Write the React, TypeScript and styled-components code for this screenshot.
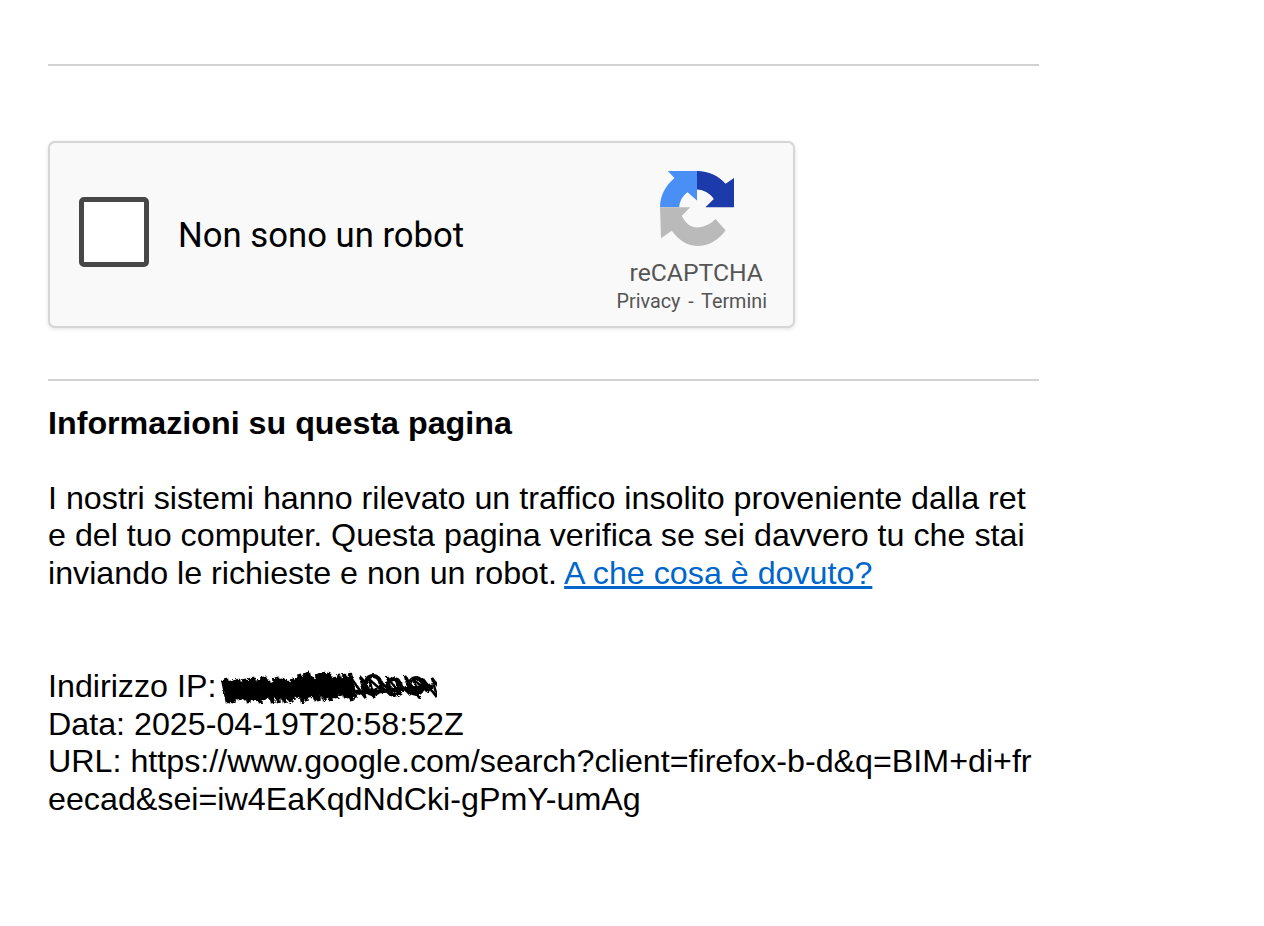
import styled, { createGlobalStyle } from 'styled-components';

const GlobalStyle = createGlobalStyle`
   html, body {
      margin: 0;
      padding: 0;
      background: #fff;
   }
`;

const Page = styled.main`
   width: 991px;
   margin-left: 48px;
   padding-top: 64px;
   font-family: 'Liberation Sans', Arial, sans-serif;
   font-size: 32.24px;
   line-height: 37.7px;
   color: #000;
   word-break: break-all;
`;

const Rule = styled.hr`
   height: 2px;
   margin: 0;
   border: 0;
   background: #d2d2d2;
`;

const CaptchaCard = styled.div`
   box-sizing: border-box;
   width: 747px;
   height: 187px;
   margin: 75px 0 51px;
   padding: 0 17px 0 29px;
   display: flex;
   align-items: center;
   justify-content: space-between;
   background: #f9f9f9;
   border: 2px solid #d6d6d6;
   border-radius: 7px;
   box-shadow: 0 1px 4px rgba(0, 0, 0, 0.12);
`;

const CheckGroup = styled.div`
   display: flex;
   align-items: center;
   gap: 29px;
`;

const CheckBox = styled.div`
   box-sizing: border-box;
   width: 70px;
   height: 70px;
   margin-bottom: 6px;
   background: #fff;
   border: 5px solid #474747;
   border-radius: 5px;
`;

const CheckLabel = styled.span`
   font-family: Roboto, sans-serif;
   font-size: 34.7px;
   line-height: 40px;
   color: #000;
   word-break: normal;
`;

const Brand = styled.div`
   align-self: flex-end;
   padding-bottom: 12px;
   display: flex;
   flex-direction: column;
   align-items: center;
   font-family: Roboto, sans-serif;
   color: #555;
   word-break: normal;
`;

const LogoMark = styled.svg`
   width: 74px;
   height: 75px;
   margin-left: 2px;
`;

const BrandName = styled.div`
   font-size: 24.7px;
   line-height: 28px;
   margin-top: 13px;
`;

const BrandLinks = styled.div`
   font-size: 19.8px;
   line-height: 24px;
   margin: 3px 9px 0 0;
   white-space: pre;
   word-spacing: -1px;
`;

const Heading = styled.div`
   font-weight: bold;
   margin-top: 24px;
`;

const Paragraph = styled.div`
   margin-top: 37px;
`;

const MoreLink = styled.a`
   color: #0066cc;
   text-decoration: underline;
`;

const Details = styled.div`
   margin-top: 75px;
`;

const Redacted = styled.svg`
   display: inline-block;
   width: 216px;
   height: 34px;
   vertical-align: -1px;
   margin: -8px 0 -6px 5px;
`;

const RecaptchaLogo = () => (
   <LogoMark viewBox='15 17 220 223' aria-hidden='true'>
      <path
         d='M38 17 L125 17 L125 105 L97 80 C84 90 73 105 72 125 L15 125 C15 90 32 60 58 38 Z'
         fill='#4a8ff5'
      />
      <path
         d='M125 17 C160 17 190 32 210 55 L235 38 L235 125 L150 125 L175 100 C165 85 145 72 125 72 Z'
         fill='#1c3aa9'
      />
      <path
         d='M15 125 L105 125 L80 150 C90 172 107 185 125 185 C145 185 165 175 180 160 L210 193 C190 222 160 240 125 240 C95 240 70 222 50 195 L18 217 Z'
         fill='#bababa'
      />
   </LogoMark>
);

// pen scribble over the address: top and bottom give the height of the band
const scribblePath = (from: number, to: number, step: number, seed: number, top: number, bottom: number) => {
   let d = '';
   let r = seed;
   for (let x = from; x < to; x += step) {
      r = (r * 137 + 59) % 251;
      const y1 = top + (r % 7);
      const y2 = bottom - ((r * 3) % 9);
      d += `${d ? 'L' : 'M'}${x} ${y1} L${x + step * 1.6} ${y2} `;
   }
   return d;
};

const App = () => {
   return (
      <>
         <GlobalStyle />
         <Page>
            <Rule />
            <CaptchaCard>
               <CheckGroup>
                  <CheckBox />
                  <CheckLabel>Non sono un robot</CheckLabel>
               </CheckGroup>
               <Brand>
                  <RecaptchaLogo />
                  <BrandName>reCAPTCHA</BrandName>
                  <BrandLinks>Privacy  -  Termini</BrandLinks>
               </Brand>
            </CaptchaCard>
            <Rule />
            <Heading>Informazioni su questa pagina</Heading>
            <Paragraph>
               I nostri sistemi hanno rilevato un traffico insolito proveniente dalla rete del tuo computer. Questa
               pagina verifica se sei davvero tu che stai inviando le richieste e non un robot.{' '}
               <MoreLink href='#'>A che cosa è dovuto?</MoreLink>
            </Paragraph>
            <Details>
               Indirizzo IP:
               <Redacted viewBox='0 0 216 34' aria-hidden='true'>
                  <defs>
                     <filter id='rough' x='-5%' y='-20%' width='110%' height='140%'>
                        <feTurbulence type='fractalNoise' baseFrequency='0.6' numOctaves='2' seed='4' />
                        <feDisplacementMap in='SourceGraphic' scale='4' />
                     </filter>
                  </defs>
                  <g fill='none' stroke='#000' filter='url(#rough)'>
                     <path d={scribblePath(2, 78, 3, 17, 7, 33)} strokeWidth='4' />
                     <path d={scribblePath(78, 130, 3, 29, 2, 31)} strokeWidth='4' />
                     <path d={scribblePath(130, 212, 9, 83, 6, 28)} strokeWidth='2.5' />
                     <path d='M4 27 C60 27 120 24 212 17' strokeWidth='5' />
                     <ellipse cx='152' cy='15' rx='8' ry='9' strokeWidth='4' />
                     <ellipse cx='173' cy='17' rx='7' ry='8' strokeWidth='4' />
                     <ellipse cx='195' cy='16' rx='7' ry='8' strokeWidth='4' />
                  </g>
               </Redacted>
               <br />
               Data: 2025-04-19T20:58:52Z
               <br />
               URL: https://www.google.com/search?client=firefox-b-d&amp;q=BIM+di+freecad&amp;sei=iw4EaKqdNdCki-gPmY-umAg
            </Details>
         </Page>
      </>
   );
};

export default App;
